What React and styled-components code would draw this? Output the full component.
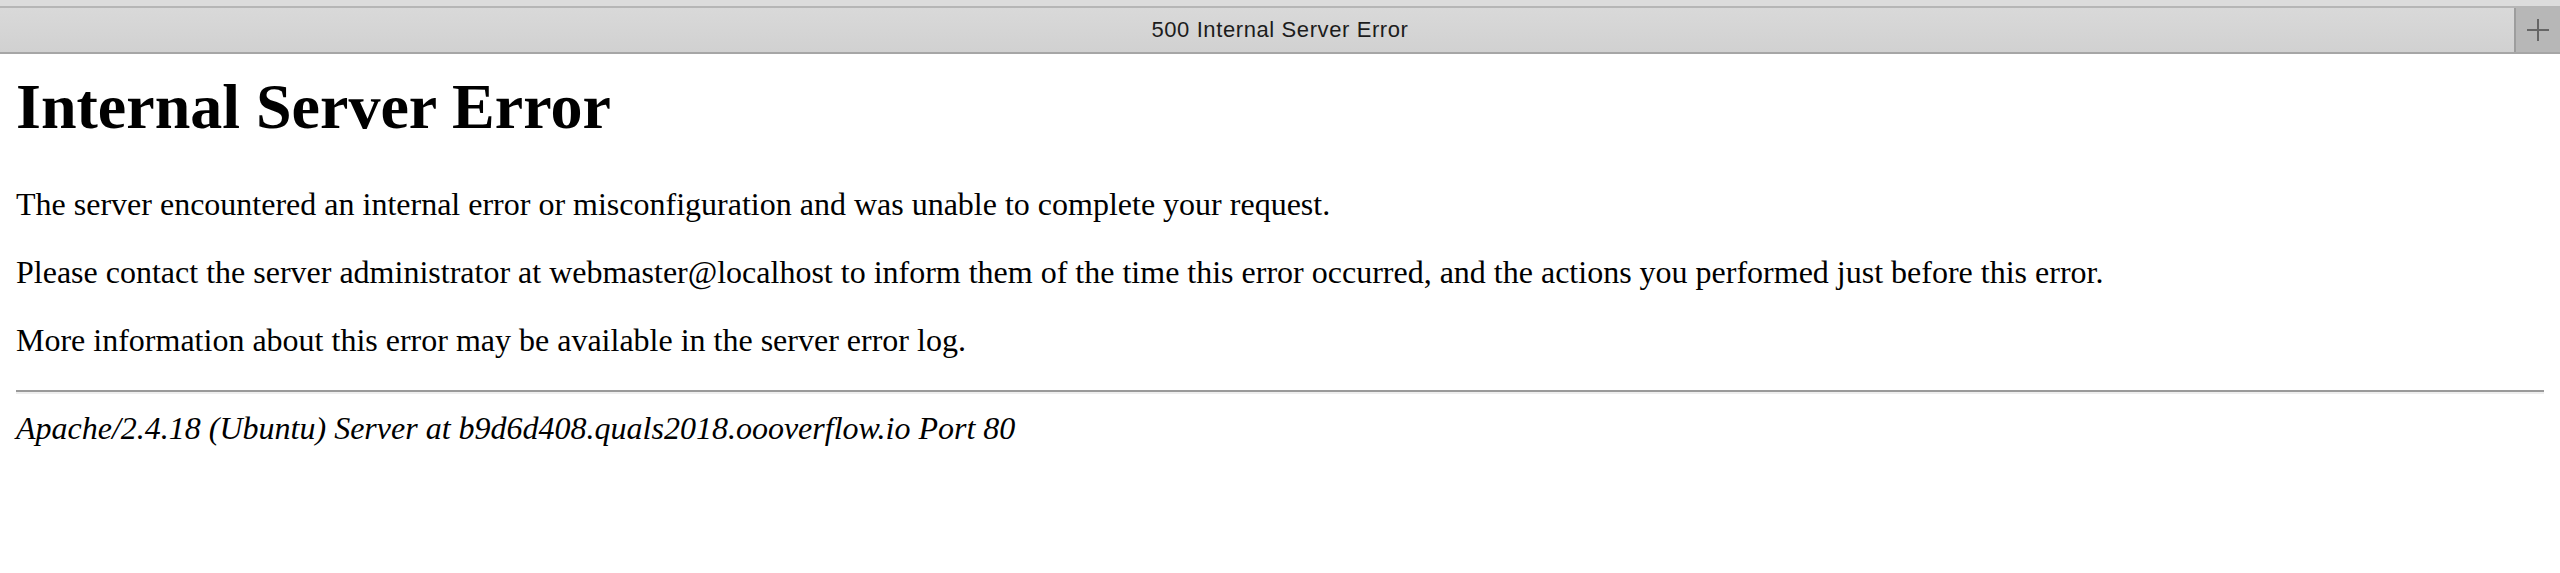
import React from 'react';
import styled, { createGlobalStyle } from 'styled-components';

const GlobalStyle = createGlobalStyle`
  html, body {
    margin: 0;
    padding: 0;
    background: #ffffff;
  }

  body {
    font-family: "Liberation Serif", "Times New Roman", serif;
    color: #000;
  }
`;

const Window = styled.div`
  width: 2560px;
  min-height: 573px;
  background: #fff;
`;

const TabStrip = styled.div`
  height: 6px;
  background: #dcdcdc;
  border-bottom: 2px solid #b6b6b6;
`;

const TabBar = styled.div`
  display: flex;
  height: 44px;
  border-bottom: 2px solid #a6a6a6;
`;

const Tab = styled.div`
  flex: 1;
  display: flex;
  align-items: center;
  justify-content: center;
  padding-left: 46px;
  background: linear-gradient(#d9d9d9, #d1d1d1);
  font-family: "Liberation Sans", Arial, sans-serif;
  font-size: 22px;
  letter-spacing: 0.6px;
  color: #1c1c1c;
`;

const NewTabButton = styled.button`
  width: 46px;
  padding: 0;
  border: 0;
  border-left: 2px solid #9d9d9d;
  background: #b7b7b7;
  display: flex;
  align-items: center;
  justify-content: center;
  cursor: pointer;
`;

const Page = styled.main`
  padding: 16px;
`;

const Heading = styled.h1`
  margin: 0 0 42px;
  font-size: 64px;
  font-weight: bold;
  line-height: normal;
`;

const Paragraph = styled.p`
  margin: 0 0 31px;
  font-size: 32px;
  line-height: normal;
`;

const Rule = styled.hr`
  margin: 0 0 16px;
  height: 0;
  border: 0;
  border-top: 2px solid #9a9a9a;
  border-bottom: 2px solid #eeeeee;
`;

const Address = styled.address`
  font-size: 32px;
  font-style: italic;
  line-height: normal;
`;

const PlusIcon = () => (
  <svg width="24" height="24" viewBox="0 0 24 24">
    <path d="M12 1v22M1 12h22" stroke="#666" strokeWidth="2" fill="none" />
  </svg>
);

export default function App() {
  return (
    <Window>
      <GlobalStyle />
      <TabStrip />
      <TabBar>
        <Tab>500 Internal Server Error</Tab>
        <NewTabButton aria-label="New tab">
          <PlusIcon />
        </NewTabButton>
      </TabBar>
      <Page>
        <Heading>Internal Server Error</Heading>
        <Paragraph>
          The server encountered an internal error or misconfiguration and was unable to complete your request.
        </Paragraph>
        <Paragraph>
          Please contact the server administrator at webmaster@localhost to inform them of the time this error
          occurred, and the actions you performed just before this error.
        </Paragraph>
        <Paragraph>More information about this error may be available in the server error log.</Paragraph>
        <Rule />
        <Address>Apache/2.4.18 (Ubuntu) Server at b9d6d408.quals2018.oooverflow.io Port 80</Address>
      </Page>
    </Window>
  );
}
